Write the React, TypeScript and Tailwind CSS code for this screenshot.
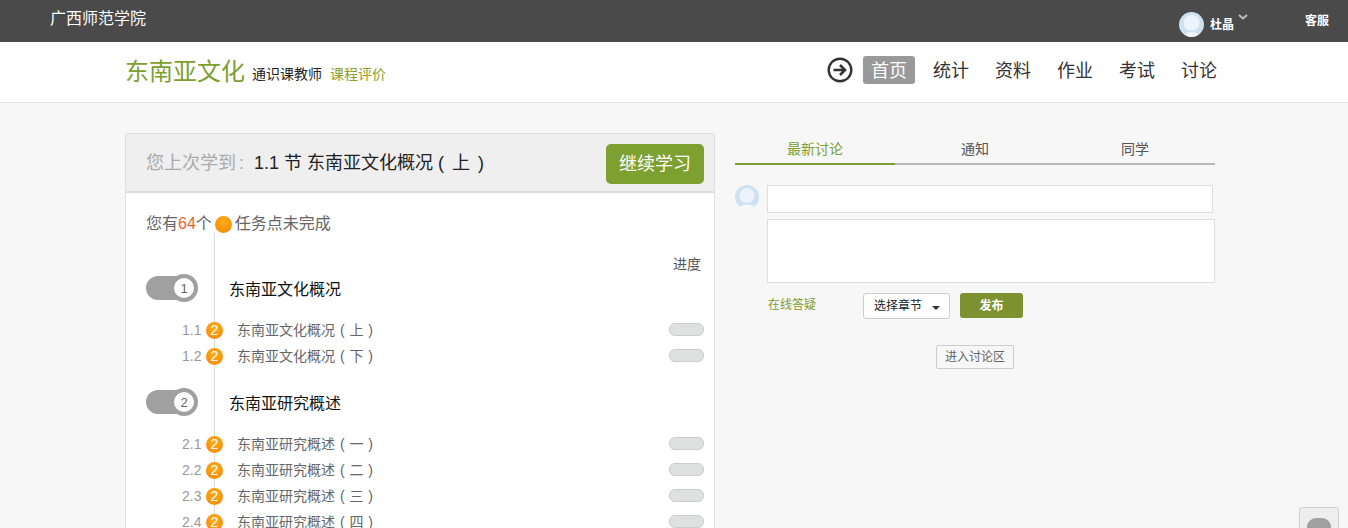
const FONT = "font-['Liberation_Sans','Noto_Sans_CJK_SC',sans-serif]";

function Avatar({ size }: { size: number }) {
  return (
    <svg width={size} height={size} viewBox="0 0 24 24" className="block shrink-0">
      <defs>
        <clipPath id={`av${size}`}><circle cx="12" cy="12" r="12" /></clipPath>
      </defs>
      <g clipPath={`url(#av${size})`}>
        <rect width="24" height="24" fill="#cfe0f2" />
        <circle cx="12" cy="10.5" r="7.6" fill="#ecf3fa" />
        <ellipse cx="12" cy="24" rx="8.5" ry="4.5" fill="#f6f9fc" />
      </g>
    </svg>
  );
}

function Badge() {
  return (
    <span className="flex h-[17px] w-[17px] shrink-0 items-center justify-center rounded-full bg-[radial-gradient(circle_at_50%_35%,#ffae1a,#f58200)] text-[14px] leading-none text-white">
      2
    </span>
  );
}

function Chapter({ n, title, first }: { n: number; title: string; first?: boolean }) {
  return (
    <div className={`flex items-center ${first ? "" : "mt-[20px]"} h-[26px]`}>
      <div className="relative h-[26px] w-[52px] shrink-0">
        <span className="absolute left-0 top-[1px] h-[24px] w-[46px] rounded-full bg-[#a0a0a0]" />
        <span className="absolute right-0 top-[-1px] flex h-[28px] w-[28px] items-center justify-center rounded-full border-[4px] border-[#a0a0a0] bg-white text-[13px] leading-none text-[#666]">
          {n}
        </span>
      </div>
      <span className="ml-[31px] mt-[4px] text-[16px] leading-[26px] text-[#111]">{title}</span>
    </div>
  );
}

function Lesson({ num, title, paren }: { num: string; title: string; paren: string }) {
  return (
    <div className="flex h-[26px] items-center">
      <span className="ml-[36px] w-[19px] text-[14px] leading-none text-[#999]">{num}</span>
      <span className="ml-[5px]"><Badge /></span>
      <span className="ml-[14px] flex-1 whitespace-pre text-[14px] leading-none text-[#666] [word-spacing:1px]">
        {title} ( {paren} )
      </span>
      <span className="mb-[2px] h-[13px] w-[35px] rounded-[6px] border border-[#cccccc] bg-[#dfe1e1]" />
    </div>
  );
}

export default function App() {
  const nav = ["统计", "资料", "作业", "考试", "讨论"];
  return (
    <div className={`relative h-[528px] w-[1348px] overflow-hidden bg-[#f7f7f7] ${FONT}`}>
      {/* top bar */}
      <header className="flex h-[42px] items-start bg-[#4a4a4a] text-white">
        <span className="ml-[50px] mt-[7px] text-[16px] leading-[24px]">广西师范学院</span>
        <div className="ml-auto flex items-start">
          <div className="mt-[12px]"><Avatar size={25} /></div>
          <span className="ml-[6px] mt-[17px] text-[12px] font-semibold leading-[16px]">杜晶</span>
          <svg width="10" height="6" viewBox="0 0 10 6" className="ml-[4px] mt-[14px]">
            <path d="M1 1l4 3.5L9 1" fill="none" stroke="#bdbdbd" strokeWidth="2" />
          </svg>
          <span className="ml-[57px] mr-[19px] mt-[13px] text-[12px] font-semibold leading-[16px]">客服</span>
        </div>
      </header>

      {/* course bar */}
      <div className="flex h-[61px] items-center border-b border-[#e4e4e4] bg-white pl-[125px]">
        <span className="text-[24px] leading-[32px] text-[#7da030]">东南亚文化</span>
        <span className="ml-[7px] mt-[3px] text-[14px] leading-[20px] text-[#222]">通识课教师</span>
        <span className="ml-[8px] mt-[3px] text-[14px] leading-[20px] text-[#8d9e2e]">课程评价</span>
        <div className="mb-[4px] ml-auto mr-[123px] flex items-center">
          <svg width="26" height="26" viewBox="0 0 26 26" className="mr-[10px]">
            <circle cx="13" cy="13" r="11.3" fill="none" stroke="#333" strokeWidth="2.4" />
            <path d="M6.5 13h11M13 8l5 5-5 5" fill="none" stroke="#333" strokeWidth="2.6" />
          </svg>
          <span className="h-[28px] w-[52px] rounded-[3px] bg-[#999] text-center text-[18px] leading-[31px] text-white">首页</span>
          {nav.map((t) => (
            <span key={t} className="ml-[10px] h-[28px] w-[52px] text-center text-[18px] leading-[31px] text-[#333]">{t}</span>
          ))}
        </div>
      </div>

      <main className="flex gap-[20px] pl-[125px] pt-[30px]">
        {/* left */}
        <section className="w-[590px] shrink-0">
          <div className="flex h-[60px] items-center justify-between rounded-t-[3px] border border-b-2 border-[#dedede] bg-[#efefef] pl-[20px] pr-[10px]">
            <div className="whitespace-pre text-[18px] leading-[28px] text-[#222]">
              <span className="text-[#aaa]">您上次学到<span className="ml-[3px] mr-[10px]">:</span></span>1.1 节 东南亚文化概况 (<span className="[word-spacing:3px]"> 上 )</span>
            </div>
            <button className="mt-[3px] h-[40px] w-[98px] rounded-[5px] bg-[#7da030] text-[18px] text-white">继续学习</button>
          </div>
          <div className="relative h-[400px] border-x border-[#dedede] bg-white pl-[20px] pr-[10px]">
            <div className="absolute bottom-0 left-[88px] top-[40px] w-px bg-[#d8d8d8]" />
            <div className="relative">
              <div className="box-content flex h-[22px] items-center pt-[20px] text-[16px] leading-[22px] text-[#666]">
                您有<span className="text-[#f0622d]">64</span>个
                <span className="mx-[3px] h-[17px] w-[17px] rounded-full bg-[radial-gradient(circle_at_50%_35%,#ffae1a,#f58200)]" />
                任务点未完成
              </div>
              <div className="mt-[19px] flex h-[20px] justify-end pr-[3px] text-[14px] leading-[20px] text-[#555]">进度</div>
              <div className="mt-[1px]"><Chapter first n={1} title="东南亚文化概况" /></div>
              <div className="mt-[16px]">
                <Lesson num="1.1" title="东南亚文化概况" paren="上" />
                <Lesson num="1.2" title="东南亚文化概况" paren="下" />
              </div>
              <Chapter n={2} title="东南亚研究概述" />
              <div className="mt-[16px]">
                <Lesson num="2.1" title="东南亚研究概述" paren="一" />
                <Lesson num="2.2" title="东南亚研究概述" paren="二" />
                <Lesson num="2.3" title="东南亚研究概述" paren="三" />
                <Lesson num="2.4" title="东南亚研究概述" paren="四" />
              </div>
            </div>
          </div>
        </section>

        {/* right */}
        <section className="w-[480px] shrink-0">
          <div className="flex h-[32px] text-center text-[14px] leading-[32px] text-[#555]">
            <div className="w-[160px] border-b-2 border-[#7da030] text-[#7da030]">最新讨论</div>
            <div className="w-[160px] border-b-2 border-[#b8b8b8]">通知</div>
            <div className="w-[160px] border-b-2 border-[#b8b8b8]">同学</div>
          </div>
          <div className="mt-[20px] flex">
            <Avatar size={24} />
            <div className="ml-[8px] flex-1">
              <div className="mr-[2px] h-[28px] border border-[#dddddd] bg-white" />
              <div className="mt-[6px] h-[64px] border border-[#dddddd] bg-white" />
            </div>
          </div>
          <div className="mt-[10px] flex items-start">
            <span className="ml-[33px] mt-[3px] text-[12px] leading-[18px] text-[#7d9a30]">在线答疑</span>
            <div className="ml-[47px] flex h-[26px] w-[87px] items-center rounded-[3px] border border-[#cccccc] bg-white pl-[10px] text-[12px] text-[#222]">
              选择章节
              <span className="ml-[10px] mt-[3px] border-x-[4px] border-t-[4px] border-x-transparent border-t-[#333]" />
            </div>
            <button className="ml-[10px] h-[25px] w-[63px] rounded-[3px] bg-[#7d9130] text-[12px] font-semibold text-white">发布</button>
          </div>
          <div className="mt-[26px] flex justify-center">
            <span className="h-[24px] w-[78px] rounded-[2px] border border-[#cccccc] text-center text-[12px] leading-[23px] text-[#666]">进入讨论区</span>
          </div>
        </section>
      </main>

      {/* floating chat button */}
      <div className="absolute left-[1299px] top-[507px] h-[40px] w-[40px] rounded-[3px] border border-[#d0d0d0] bg-[#eeeeee]">
        <div className="mx-auto mt-[10px] h-[18px] w-[24px] rounded-full bg-[#a0a0a0]" />
      </div>
    </div>
  );
}
